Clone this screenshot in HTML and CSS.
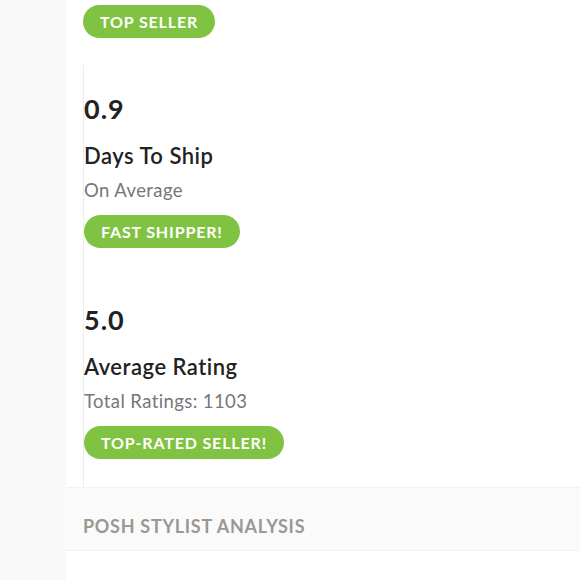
FILE: index.html
```html
<!DOCTYPE html>
<html lang="en">
<head>
<meta charset="utf-8">
<title>Seller stats</title>
<link rel="stylesheet" href="styles.css">
</head>
<body>
<main class="page">
  <section class="stats">
    <div class="stat stat-first">
      <span class="badge">Top Seller</span>
    </div>
    <div class="stat">
      <div class="stat-value">0.9</div>
      <div class="stat-title">Days To Ship</div>
      <div class="stat-sub">On Average</div>
      <span class="badge">Fast Shipper!</span>
    </div>
    <div class="stat">
      <div class="stat-value">5.0</div>
      <div class="stat-title">Average Rating</div>
      <div class="stat-sub">Total Ratings: 1103</div>
      <span class="badge">Top-Rated Seller!</span>
    </div>
  </section>
  <section class="band">
    <h2 class="band-title">Posh Stylist Analysis</h2>
  </section>
  <section class="after"></section>
</main>
</body>
</html>
```

FILE: styles.css
```css
html, body {
  margin: 0;
  padding: 0;
}
body {
  background: #f9f9f9;
  font-family: Lato, "Liberation Sans", sans-serif;
  color: #222;
}
.page {
  margin-left: 66px;
  background: #fff;
  min-height: 580px;
  display: flex;
  flex-direction: column;
}
.stats {
  padding-left: 17px;
  display: flex;
  flex-direction: column;
}
.stat {
  border-left: 1px solid #ececec;
  padding: 29px 0 28px 0;
  display: flex;
  flex-direction: column;
  align-items: flex-start;
}
.stat-first {
  border-left: 0;
  padding: 5px 0 27px 0;
}
.stat-value {
  font-size: 27px;
  line-height: 30px;
  font-weight: 700;
  letter-spacing: 1px;
  color: #222;
}
.stat-title {
  margin-top: 19px;
  font-size: 22px;
  line-height: 26px;
  font-weight: 600;
  letter-spacing: 0.5px;
  color: #222;
}
.stat-sub {
  margin-top: 10px;
  font-size: 18.5px;
  line-height: 22px;
  letter-spacing: 0.4px;
  color: #777;
}
.badge {
  display: inline-block;
  margin-top: 14px;
  height: 33px;
  line-height: 33px;
  padding: 0 17px;
  border-radius: 17px;
  background: #80c342;
  color: #fff;
  font-size: 16px;
  font-weight: 700;
  letter-spacing: 0.85px;
  text-transform: uppercase;
}
.stat-first .badge {
  margin-top: 0;
}
.band {
  background: #fafafa;
  border-top: 1px solid #f2f2f2;
  border-bottom: 1px solid #f2f2f2;
  height: 64px;
  box-sizing: border-box;
  padding: 14px 0 0 17px;
  display: flex;
  align-items: center;
}
.band-title {
  margin: 0;
  font-size: 18px;
  font-weight: 700;
  letter-spacing: 0.7px;
  text-transform: uppercase;
  color: #9b9792;
}
.after {
  flex: 1;
  background: #fff;
}
```
